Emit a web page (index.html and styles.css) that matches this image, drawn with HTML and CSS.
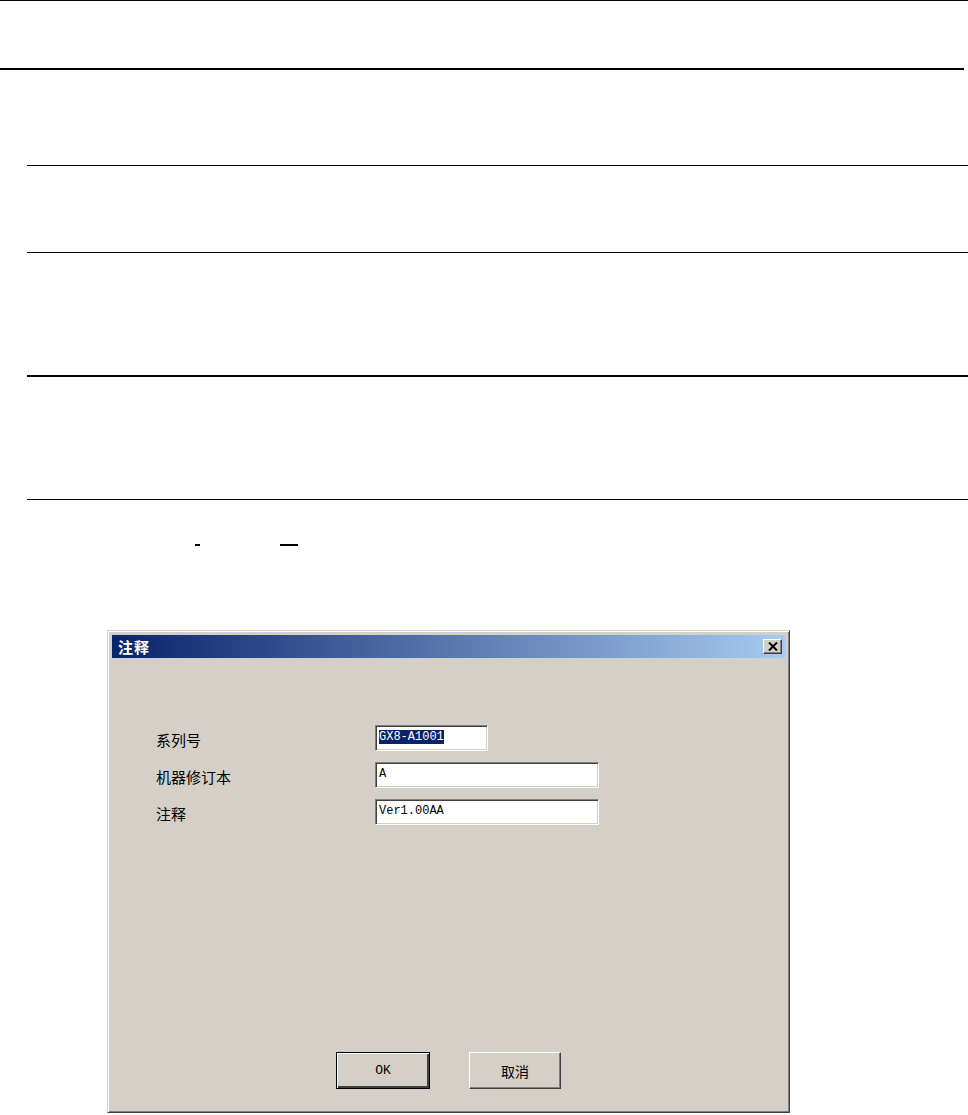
FILE: index.html
```html
<!DOCTYPE html>
<html lang="zh-CN">
<head>
  <meta charset="utf-8">
  <title>注释</title>
  <link rel="stylesheet" href="styles.css">
</head>
<body>

<div class="page">
  <!-- table rules of the document page -->
  <div class="band band-top"></div>
  <div class="band band-head"></div>
  <div class="band band-row band-1"></div>
  <div class="band band-row band-2"></div>
  <div class="band band-row band-3"></div>
  <div class="band band-row band-4"></div>

  <div class="marks">
    <span class="mark mark-short"></span>
    <span class="mark mark-long"></span>
  </div>

  <!-- dialog -->
  <div class="dialog">
    <div class="titlebar">
      <span class="title">注释</span>
      <span class="close-btn">
        <svg width="10" height="9" viewBox="0 0 10 9">
          <path d="M1 0.5 L9 8.5 M9 0.5 L1 8.5" stroke="#000" stroke-width="2" fill="none"/>
        </svg>
      </span>
    </div>

    <div class="dialog-body">
      <div class="form">
        <label class="label">系列号</label>
        <div class="field field-short"><span class="selected">GX8-A1001</span></div>

        <label class="label">机器修订本</label>
        <div class="field">A</div>

        <label class="label">注释</label>
        <div class="field">Ver1.00AA</div>
      </div>

      <div class="buttons">
        <button class="btn btn-default">OK</button>
        <button class="btn btn-cancel">取消</button>
      </div>
    </div>
  </div>
</div>

</body>
</html>
```

FILE: styles.css
```css
body {
  margin: 0;
  background-color: #fff;
  font-family: 'Noto Sans CJK SC', 'Liberation Sans', sans-serif;
}
.page {
  width: 968px;
}
.band {
  border-top: 1px solid #000;
}
.band-top {
  height: 67px;
}
.band-head {
  width: 964px;
  border-top-width: 2px;
  height: 95px;
}
.band-row {
  margin-left: 27px;
}
.band-1 {
  height: 86px;
}
.band-2 {
  height: 122px;
}
.band-3 {
  border-top-width: 2px;
  height: 122px;
}
.band-4 {
  height: 44px;
}
.marks {
  display: flex;
  height: 2px;
}
.mark {
  display: block;
  height: 2px;
  background-color: #000;
}
.mark-short {
  width: 5px;
  margin-left: 195px;
}
.mark-long {
  width: 18px;
  margin-left: 80px;
}

/* dialog */
.dialog {
  box-sizing: border-box;
  width: 683px;
  height: 483px;
  margin: 84px 0 0 107px;
  padding: 4px;
  background-color: #d4d0c8;
  border: 1px solid;
  border-color: #d4d0c8 #404040 #404040 #d4d0c8;
  box-shadow: inset 1px 1px #fff, inset -1px -1px #808080;
  display: flex;
  flex-direction: column;
}
.titlebar {
  height: 23px;
  flex-shrink: 0;
  display: flex;
  align-items: center;
  justify-content: space-between;
  padding: 0 3px 0 6px;
  background: linear-gradient(to right, #0a246a, #a6caf0);
}
.title {
  color: #fff;
  font-weight: bold;
  font-size: 15px;
  letter-spacing: 1px;
}
.close-btn {
  box-sizing: border-box;
  width: 19px;
  height: 15px;
  display: flex;
  align-items: center;
  justify-content: center;
  background-color: #d4d0c8;
  border: 1px solid;
  border-color: #fff #404040 #404040 #fff;
  box-shadow: inset -1px -1px #808080;
}
.dialog-body {
  flex: 1;
  display: flex;
  flex-direction: column;
  padding: 0 0 19px 0;
}
.form {
  margin: 67px 0 0 44px;
  display: grid;
  grid-template-columns: 219px auto;
  row-gap: 11px;
  align-items: center;
  justify-items: start;
}
.label {
  font-size: 15px;
  padding-top: 3px;
  color: #000;
}
.field {
  box-sizing: border-box;
  width: 224px;
  height: 26px;
  padding: 4px 3px 0 3px;
  background-color: #fff;
  border: 1px solid;
  border-color: #808080 #fff #fff #808080;
  box-shadow: inset 1px 1px #404040, inset -1px -1px #d4d0c8;
  font-family: 'Liberation Mono', monospace;
  font-size: 12px;
  line-height: 15px;
  color: #000;
}
.field-short {
  width: 113px;
}
.selected {
  background-color: #0a246a;
  color: #fff;
}
.buttons {
  margin-top: auto;
  display: flex;
  justify-content: center;
  gap: 39px;
}
.btn {
  box-sizing: border-box;
  width: 92px;
  height: 37px;
  padding: 0;
  background-color: #d4d0c8;
  border: 1px solid;
  border-color: #fff #404040 #404040 #fff;
  box-shadow: inset -1px -1px #808080;
  font-size: 14px;
  color: #000;
}
.btn-default {
  width: 94px;
  border: 1px solid #000;
  box-shadow: inset 1px 1px #fff, inset -2px -2px #404040;
  font-family: 'Liberation Mono', monospace;
  font-size: 13px;
}
.btn-cancel {
  font-family: 'Noto Sans CJK SC', sans-serif;
}
```
